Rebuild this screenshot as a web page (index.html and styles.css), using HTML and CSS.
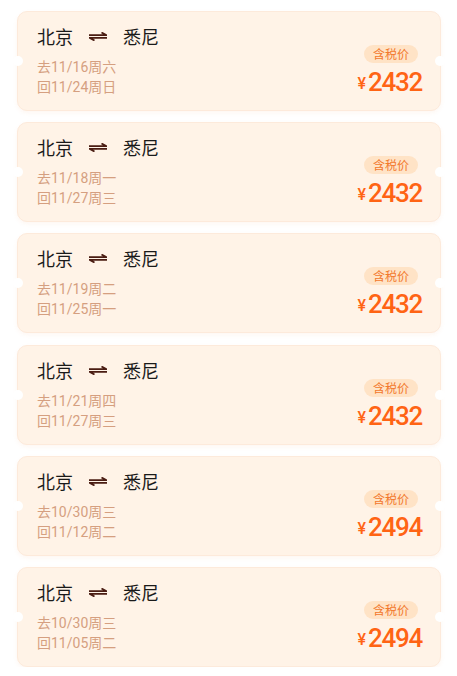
FILE: index.html
```html
<!DOCTYPE html>
<html lang="zh">
<head>
<meta charset="utf-8">
<link rel="stylesheet" href="styles.css">
</head>
<body>
<div class="list">
  <div class="card">
    <div class="left">
      <div class="route"><span>北京</span><svg class="arrow" width="18" height="9" viewBox="0 0 18 9"><path d="M0 3.2H17.5L12.5 0.4" fill="none" stroke="#4a1c12" stroke-width="1.7"/><path d="M18 5.8H0.5L5.5 8.6" fill="none" stroke="#4a1c12" stroke-width="1.7"/></svg><span>悉尼</span></div>
      <div class="dates"><div>去11/16周六</div><div>回11/24周日</div></div>
    </div>
    <div class="right"><span class="badge">含税价</span><div class="price"><span class="yen">¥</span>2432</div></div>
  </div>
  <div class="card">
    <div class="left">
      <div class="route"><span>北京</span><svg class="arrow" width="18" height="9" viewBox="0 0 18 9"><path d="M0 3.2H17.5L12.5 0.4" fill="none" stroke="#4a1c12" stroke-width="1.7"/><path d="M18 5.8H0.5L5.5 8.6" fill="none" stroke="#4a1c12" stroke-width="1.7"/></svg><span>悉尼</span></div>
      <div class="dates"><div>去11/18周一</div><div>回11/27周三</div></div>
    </div>
    <div class="right"><span class="badge">含税价</span><div class="price"><span class="yen">¥</span>2432</div></div>
  </div>
  <div class="card">
    <div class="left">
      <div class="route"><span>北京</span><svg class="arrow" width="18" height="9" viewBox="0 0 18 9"><path d="M0 3.2H17.5L12.5 0.4" fill="none" stroke="#4a1c12" stroke-width="1.7"/><path d="M18 5.8H0.5L5.5 8.6" fill="none" stroke="#4a1c12" stroke-width="1.7"/></svg><span>悉尼</span></div>
      <div class="dates"><div>去11/19周二</div><div>回11/25周一</div></div>
    </div>
    <div class="right"><span class="badge">含税价</span><div class="price"><span class="yen">¥</span>2432</div></div>
  </div>
  <div class="card">
    <div class="left">
      <div class="route"><span>北京</span><svg class="arrow" width="18" height="9" viewBox="0 0 18 9"><path d="M0 3.2H17.5L12.5 0.4" fill="none" stroke="#4a1c12" stroke-width="1.7"/><path d="M18 5.8H0.5L5.5 8.6" fill="none" stroke="#4a1c12" stroke-width="1.7"/></svg><span>悉尼</span></div>
      <div class="dates"><div>去11/21周四</div><div>回11/27周三</div></div>
    </div>
    <div class="right"><span class="badge">含税价</span><div class="price"><span class="yen">¥</span>2432</div></div>
  </div>
  <div class="card">
    <div class="left">
      <div class="route"><span>北京</span><svg class="arrow" width="18" height="9" viewBox="0 0 18 9"><path d="M0 3.2H17.5L12.5 0.4" fill="none" stroke="#4a1c12" stroke-width="1.7"/><path d="M18 5.8H0.5L5.5 8.6" fill="none" stroke="#4a1c12" stroke-width="1.7"/></svg><span>悉尼</span></div>
      <div class="dates"><div>去10/30周三</div><div>回11/12周二</div></div>
    </div>
    <div class="right"><span class="badge">含税价</span><div class="price"><span class="yen">¥</span>2494</div></div>
  </div>
  <div class="card">
    <div class="left">
      <div class="route"><span>北京</span><svg class="arrow" width="18" height="9" viewBox="0 0 18 9"><path d="M0 3.2H17.5L12.5 0.4" fill="none" stroke="#4a1c12" stroke-width="1.7"/><path d="M18 5.8H0.5L5.5 8.6" fill="none" stroke="#4a1c12" stroke-width="1.7"/></svg><span>悉尼</span></div>
      <div class="dates"><div>去10/30周三</div><div>回11/05周二</div></div>
    </div>
    <div class="right"><span class="badge">含税价</span><div class="price"><span class="yen">¥</span>2494</div></div>
  </div>
</div>
</body>
</html>
```
FILE: styles.css
```css
html, body {
  margin: 0;
  padding: 0;
  background: #ffffff;
}
body {
  font-family: Roboto, "Noto Sans CJK SC", sans-serif;
}
.list {
  display: flex;
  flex-direction: column;
  gap: 11.2px;
  padding: 11px 16px 0 17px;
}
.card {
  position: relative;
  box-sizing: border-box;
  height: 100px;
  background: #fff3e7;
  border: 1px solid #fdeadb;
  border-radius: 10px;
  box-shadow: 0 2px 4px rgba(240, 150, 90, 0.08);
  display: flex;
  justify-content: space-between;
  align-items: flex-start;
  padding: 12px 18px 0 19px;
}
.card::before,
.card::after {
  content: "";
  position: absolute;
  top: 44px;
  width: 10px;
  height: 10px;
  border-radius: 50%;
  background: #ffffff;
}
.card::before {
  left: -5px;
}
.card::after {
  right: -5px;
}
.route {
  display: flex;
  align-items: center;
  gap: 16px;
  height: 24px;
  font-family: "Noto Sans CJK SC", sans-serif;
  font-size: 18px;
  color: #1a1a1a;
}
.arrow {
  display: block;
  margin-top: 1px;
}
.dates {
  margin-top: 9px;
  font-size: 14px;
  line-height: 20px;
  color: #d59f80;
}
.right {
  margin-top: 21px;
  display: flex;
  flex-direction: column;
  align-items: flex-end;
}
.badge {
  display: block;
  height: 18px;
  line-height: 18px;
  padding: 0 9px;
  margin-right: 4px;
  border-radius: 9px;
  background: #ffe3c6;
  color: #f2782c;
  font-family: "Noto Sans CJK SC", sans-serif;
  font-size: 12px;
}
.price {
  margin-top: 4px;
  font-family: Roboto, sans-serif;
  font-weight: 500;
  font-size: 26px;
  line-height: 30px;
  letter-spacing: -1.3px;
  color: #ff6414;
}
.yen {
  font-size: 16px;
  letter-spacing: 0;
  margin-right: 2px;
  position: relative;
  top: -2px;
}
```
